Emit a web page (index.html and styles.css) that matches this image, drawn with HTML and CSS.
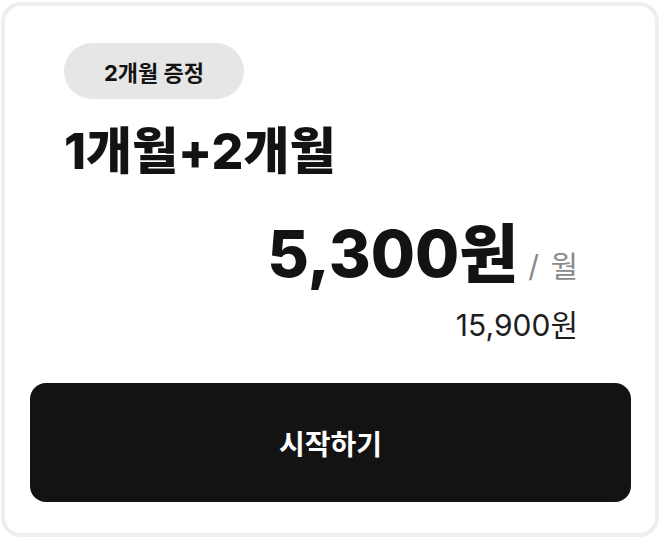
FILE: index.html
```html
<!DOCTYPE html>
<html lang="ko">
<head>
<meta charset="utf-8">
<link rel="stylesheet" href="styles.css">
</head>
<body>
<div class="card">
  <div class="content">
    <span class="badge">2개월 증정</span>
    <h1 class="title">1개월+2개월</h1>
    <div class="price-row">
      <span class="price">5,300원</span>
      <span class="unit">/ 월</span>
    </div>
    <div class="original">15,900원</div>
  </div>
  <button class="cta">시작하기</button>
</div>
</body>
</html>
```
FILE: styles.css
```css
* { box-sizing: border-box; }
html, body { margin: 0; padding: 0; background: #fff; }
body {
  font-family: Inter, "Noto Sans CJK KR", sans-serif;
  color: #131313;
}
.card {
  margin: 2px 1px;
  width: 658px;
  height: 535px;
  border: 4px solid #eeeeee;
  border-radius: 20px;
  display: flex;
  flex-direction: column;
  padding: 37px 24px 31px 25px;
}
.content {
  display: flex;
  flex-direction: column;
  align-items: flex-start;
  padding: 0 53px 0 34px;
  flex: 1;
}
.badge {
  display: inline-flex;
  align-items: center;
  justify-content: center;
  width: 180px;
  height: 56px;
  border-radius: 28px;
  background: #e6e6e6;
  font-size: 22px;
  font-weight: 700;
  color: #131313;
}
.title {
  margin: 22px 0 0 0;
  font-size: 50px;
  line-height: 60px;
  font-weight: 800;
}
.price-row {
  align-self: flex-end;
  display: flex;
  align-items: baseline;
  gap: 10px;
  margin-top: 38px;
}
.price {
  font-size: 64px;
  line-height: 70px;
  font-weight: 800;
}
.unit {
  font-size: 30px;
  line-height: 34px;
  color: #8a8a8a;
  font-weight: 400;
  word-spacing: 3px;
}
.original {
  align-self: flex-end;
  margin-top: 18px;
  font-size: 30px;
  line-height: 36px;
  color: #1e1e1e;
}
.cta {
  height: 119px;
  border: 0;
  border-radius: 16px;
  background: #131313;
  color: #fff;
  font-family: inherit;
  font-size: 28px;
  font-weight: 700;
  width: 100%;
  cursor: pointer;
}
```
